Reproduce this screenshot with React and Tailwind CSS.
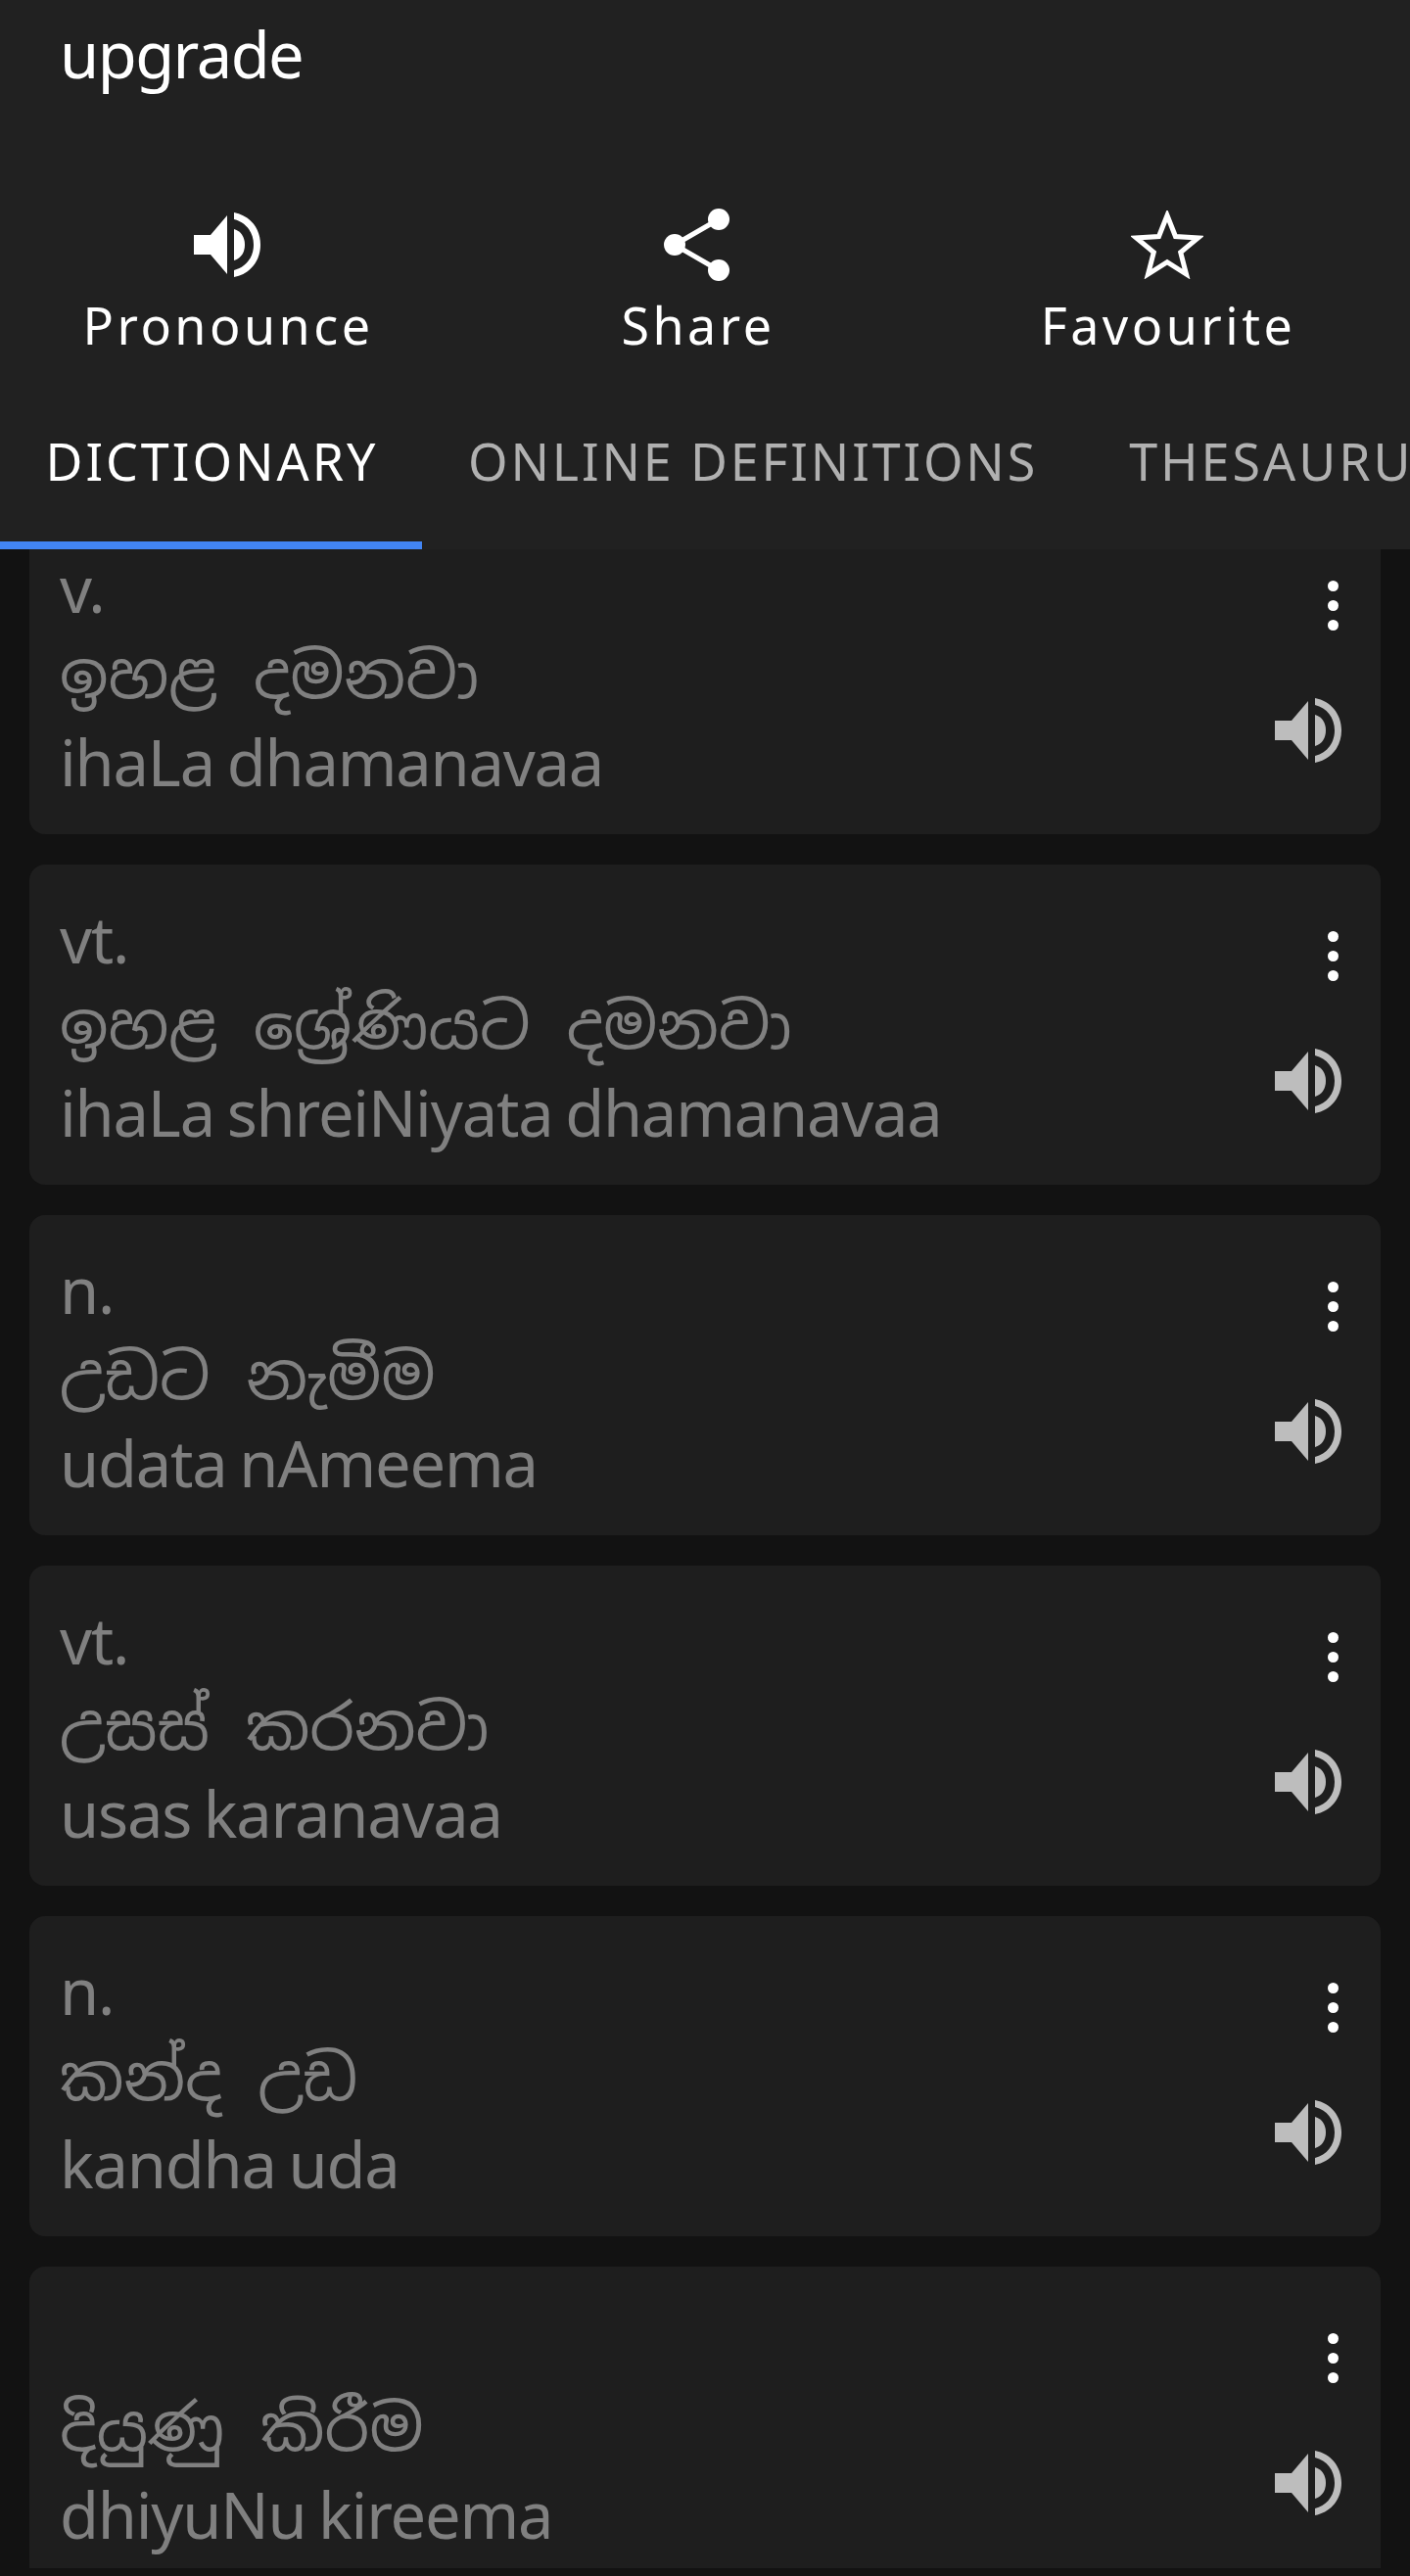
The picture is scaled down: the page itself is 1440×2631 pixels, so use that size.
import React from 'react';

const FONT = "font-['Noto_Sans','Noto_Sans_Sinhala','DejaVu_Sans',sans-serif]";

const entries = [
  { pos: 'v.', si: 'ඉහළ දමනවා', en: 'ihaLa dhamanavaa' },
  { pos: 'vt.', si: 'ඉහළ ශ්‍රේණියට දමනවා', en: 'ihaLa shreiNiyata dhamanavaa' },
  { pos: 'n.', si: 'උඩට නැමීම', en: 'udata nAmeema' },
  { pos: 'vt.', si: 'උසස් කරනවා', en: 'usas karanavaa' },
  { pos: 'n.', si: 'කන්ද උඩ', en: 'kandha uda' },
  { pos: '', si: 'දියුණු කිරීම', en: 'dhiyuNu kireema' },
];

function Speaker({ className }) {
  return (
    <svg viewBox="0 0 68 66" className={className} fill="currentColor">
      <path d="M0 23H17L34 3V63L17 43H0Z" />
      <path d="M41 0C57 3 68 16 68 33C68 50 57 63 41 66V59C53 56 61 46 61 33C61 20 53 10 41 7Z" />
      <path d="M41 17C48 19 52 25 52 33C52 41 48 47 41 49Z" />
    </svg>
  );
}

function ShareIcon() {
  return (
    <svg viewBox="0 0 68 74" className="w-[68px] h-[74px] text-white" fill="currentColor">
      <path d="M11 37L56 11M11 37L56 63" stroke="currentColor" strokeWidth="5" fill="none" />
      <circle cx="11" cy="37" r="11" />
      <circle cx="56" cy="11" r="11" />
      <circle cx="56" cy="63" r="11" />
    </svg>
  );
}

function StarIcon() {
  return (
    <svg viewBox="0 0 74 70" className="w-[74px] h-[70px] text-white" fill="none">
      <path d="M37 5L45.5 26.5L68.5 28L50.7 42.7L56.5 65L37 52.7L17.5 65L23.3 42.7L5.5 28L28.5 26.5Z" stroke="currentColor" strokeWidth="5" />
    </svg>
  );
}

function Action({ icon, label }) {
  return (
    <div className="flex flex-col items-center">
      <div className="h-[74px] flex items-center justify-center">{icon}</div>
      <div className="mt-[11px] pl-[2px] text-[52px] leading-[68px] tracking-[3.5px] text-white">{label}</div>
    </div>
  );
}

function Card({ entry }) {
  return (
    <div className="h-[327px] shrink-0 mx-[30px] rounded-2xl bg-[#1e1e1e] flex justify-between pl-[31px] pr-[43px]">
      <div className="pt-[28px] text-[65px] leading-[90px] tracking-[-1.2px] text-[#808080] whitespace-nowrap">
        <div className="h-[90px] pt-[3px]">{entry.pos}</div>
        <div className="h-[90px] tracking-normal [word-spacing:20px]">{entry.si}</div>
        <div className="h-[90px] [word-spacing:-3px]">{entry.en}</div>
      </div>
      <div className="flex flex-col items-end pt-[68px]">
        <div className="flex flex-col gap-[9px]">
          <div className="w-[11px] h-[11px] rounded-full bg-white" />
          <div className="w-[11px] h-[11px] rounded-full bg-white" />
          <div className="w-[11px] h-[11px] rounded-full bg-white" />
        </div>
        <Speaker className="w-[68px] h-[66px] mt-[69px] text-[#bdbdbd] -mr-[3px]" />
      </div>
    </div>
  );
}

export default function App() {
  return (
    <div className={`h-[2631px] w-[1440px] overflow-hidden bg-[#121212] ${FONT}`}>
      <div className="h-[561px] bg-[#212121] flex flex-col relative z-10">
        <div className="pl-[61px] pt-[14px] h-[213px] text-[65px] leading-[82px] tracking-[-1.5px] text-white">upgrade</div>
        <div className="grid grid-cols-3 gap-x-4 pr-4">
          <Action icon={<Speaker className="w-[68px] h-[66px] text-white" />} label="Pronounce" />
          <Action icon={<ShareIcon />} label="Share" />
          <Action icon={<StarIcon />} label="Favourite" />
        </div>
        <div className="mt-auto flex overflow-hidden whitespace-nowrap text-[52px] tracking-[3px] leading-[68px]">
          <div className="shrink-0 h-[146px] w-[431px] flex justify-center pt-[22px] pl-[2px] border-b-8 border-[#4285f4] text-white">DICTIONARY</div>
          <div className="shrink-0 h-[146px] pl-[47px] pr-[45px] pt-[22px] tracking-[2.85px] text-[#b0b0b0]">ONLINE DEFINITIONS</div>
          <div className="shrink-0 h-[146px] px-[48px] pt-[22px] text-[#b0b0b0]">THESAURUS</div>
        </div>
      </div>
      {/* list is scrolled, first card sits partly under the header */}
      <div className="h-[2062px] overflow-hidden">
        <div className="-mt-[36px] flex flex-col gap-[31px]">
          {entries.map((e) => (
            <Card key={e.en} entry={e} />
          ))}
        </div>
      </div>
    </div>
  );
}
